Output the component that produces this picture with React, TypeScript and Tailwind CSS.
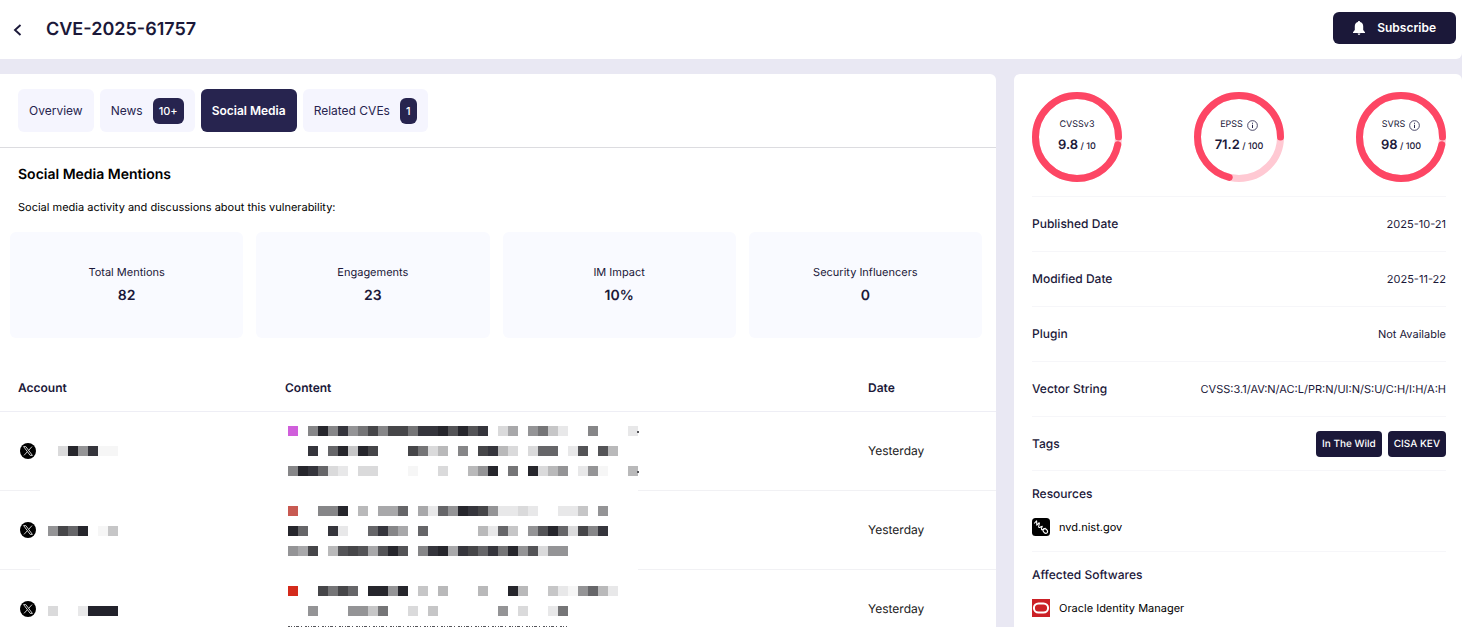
import React from "react";

const tabs = [
  { label: "Overview" },
  { label: "News", count: "10+" },
  { label: "Social Media", active: true },
  { label: "Related CVEs", count: "1" },
];

const stats = [
  { label: "Total Mentions", value: "82" },
  { label: "Engagements", value: "23" },
  { label: "IM Impact", value: "10%" },
  { label: "Security Influencers", value: "0" },
];

const scores = [
  { label: "CVSSv3", value: "9.8", max: "10", percent: 97, info: false },
  { label: "EPSS", value: "71.2", max: "100", percent: 71.2, info: true },
  { label: "SVRS", value: "98", max: "100", percent: 97, info: true },
];

const details = [
  { label: "Published Date", value: "2025-10-21" },
  { label: "Modified Date", value: "2025-11-22" },
  { label: "Plugin", value: "Not Available" },
  { label: "Vector String", value: "CVSS:3.1/AV:N/AC:L/PR:N/UI:N/S:U/C:H/I:H/A:H" },
];

const tags = ["In The Wild", "CISA KEV"];

// Redacted posts: one character per tile, "." is an empty tile.
const mentions = [
  {
    id: 1,
    date: "Yesterday",
    top: 2,
    account: ".d293ff",
    content: [
      "M.828397484473325253.da.97ce..8...e",
      "..3.62c24...47db.8.43bd.d66.e5.5b",
      "8236de.dd...f..d..b92.7.2db9.e9f..b",
    ],
    dots: [0, 2],
  },
  {
    id: 2,
    date: "Yesterday",
    top: 3,
    account: "9462.fc",
    content: [
      "R..882.b.aa6.ae692349eede..eec.9",
      "26..3e..638a.6.....be6c.9526d483",
      "9a4.b545a525.832a34637295d99",
    ],
    dots: [],
  },
  {
    id: 3,
    date: "Yesterday",
    top: 4,
    account: "d..e111",
    content: [
      "D..4746.2292.c.b...b..2b..cef96be",
      "..9...99c7..d.c......9.d..e7",
    ],
    dots: [],
    cut: true,
  },
];

const tileColors: Record<string, string> = {
  "1": "#22222b",
  "2": "#26262c",
  "3": "#35353c",
  "4": "#464649",
  "5": "#545457",
  "6": "#666669",
  "7": "#757577",
  "8": "#868688",
  "9": "#949496",
  a: "#a8a8aa",
  b: "#b9b9ba",
  c: "#c6c6c7",
  d: "#dadadb",
  e: "#e8e8e9",
  f: "#f6f6f6",
  M: "#d05fdb",
  R: "#c85a52",
  D: "#d42b1c",
};

interface TilesProps {
  lines: string[];
  top: number;
  width: number;
  dots?: number[];
  cut?: boolean;
}

const Tiles: React.FC<TilesProps> = ({ lines, top, width, dots = [], cut }) => {
  return (
    <svg width={width} height={54} className="block overflow-visible" shapeRendering="crispEdges" aria-hidden="true">
      {lines.map((line, row) =>
        line.split("").map((tile, col) =>
          tile === "." ? null : (
            <rect
              key={`${row}-${col}`}
              x={col * 10}
              y={top + row * 20}
              width={10}
              height={10}
              fill={tileColors[tile]}
            />
          )
        )
      )}
      {dots.map((row) => (
        <rect key={row} x={349} y={top + row * 20 + 5} width={2} height={2} fill="#55555a" />
      ))}
      {cut && (
        <path
          d={`M0 ${top + 40.5}H280`}
          stroke="#55555a"
          strokeDasharray="2 1 1 2 1 1 3 2 1 3"
        />
      )}
    </svg>
  );
};

const XLogo = () => (
  <svg width="16" height="16" viewBox="0 0 16 16" className="block" aria-hidden="true">
    <circle cx="8" cy="8" r="8" fill="#000" />
    <path
      d="M3.6 3.6h2.2l6.6 8.8h-2.2zM12 3.6 8.7 7.3M7.3 8.8 4 12.4"
      fill="none"
      stroke="#fff"
      strokeWidth="0.8"
    />
  </svg>
);

const InfoIcon = () => (
  <svg width="11" height="11" viewBox="0 0 12 12" fill="none" stroke="#28264d" aria-hidden="true">
    <circle cx="6" cy="6" r="5.3" strokeWidth="0.9" />
    <path d="M6 5.2v3.6M6 3v1.1" strokeWidth="1.1" />
  </svg>
);

const BellIcon = () => (
  <svg width="12" height="14" viewBox="0 0 12 14" fill="#fff" aria-hidden="true">
    <path d="M6 0C5.3 0 4.9.5 4.9 1.1 2.9 1.6 1.8 3.2 1.8 5.2V9L0 11.2V12h12v-.8L10.2 9V5.2C10.2 3.2 9.1 1.6 7.1 1.1 7.1.5 6.7 0 6 0zM4.7 12.6h2.6C7.3 13.5 6.7 14 6 14s-1.3-.5-1.3-1.4z" />
  </svg>
);

const NvdLogo = () => (
  <svg width="18" height="18" viewBox="0 0 18 18" aria-hidden="true">
    <rect width="18" height="18" rx="3.5" fill="#000" />
    <path
      d="M2.2 5.5 4.6 2.8 4.8 7.2 7.2 4.6M7.2 4.6C8 6.3 6 8 6.8 9.2S9.6 7.8 10.2 8.2 8.6 10.6 9.6 11.6 12.4 9.8 13.4 10.2"
      fill="none"
      stroke="#fff"
      strokeWidth="1.1"
      strokeLinejoin="round"
    />
    <ellipse
      cx="13.3"
      cy="13"
      rx="2.5"
      ry="1.9"
      transform="rotate(45 13.3 13)"
      fill="none"
      stroke="#fff"
      strokeWidth="1.1"
    />
  </svg>
);

const OracleLogo = () => (
  <svg width="18" height="18" viewBox="0 0 18 18" aria-hidden="true">
    <rect width="18" height="18" fill="#cb2026" />
    <rect x="1.9" y="4.4" width="14.2" height="9.2" rx="4.6" fill="none" stroke="#fff" strokeWidth="2" />
  </svg>
);

interface ScoreRingProps {
  score: {
    label: string;
    value: string;
    max: string;
    percent: number;
    info: boolean;
  };
}

const ScoreRing: React.FC<ScoreRingProps> = ({ score }) => {
  return (
    <div className="grid size-[90px] place-items-center">
      <svg viewBox="0 0 90 90" className="col-start-1 row-start-1 size-full" fill="none" aria-hidden="true">
        <circle cx="45" cy="45" r="41.5" stroke="#ffc9d3" strokeWidth="7" />
        <circle
          cx="45"
          cy="45"
          r="41.5"
          stroke="#fd4664"
          strokeWidth="7"
          strokeLinecap="round"
          pathLength="100"
          strokeDasharray={`${score.percent} 100`}
          transform="matrix(1 0 0 -1 0 90)"
        />
      </svg>
      <div className="col-start-1 row-start-1 pb-1 text-center">
        <div className="flex h-5 items-center justify-center gap-1 text-[9px]">
          {score.label}
          {score.info && <InfoIcon />}
        </div>
        <div className="h-5 text-[9px] leading-5 font-medium">
          <span className="text-[13px] font-semibold">{score.value}</span> / {score.max}
        </div>
      </div>
    </div>
  );
};

const App = () => {
  return (
    <div className="flex h-screen flex-col gap-[15px] overflow-hidden bg-[#e9e8f3] font-[Inter,sans-serif] text-[#1b1839] [text-rendering:geometricPrecision]">
      <header className="flex h-[59px] shrink-0 items-center justify-between rounded-br-md bg-white pr-1.5 pl-3">
        <div className="flex items-center gap-6">
          <button type="button" aria-label="Back" className="cursor-pointer">
            <svg width="10" height="12" viewBox="0 0 10 12" fill="none" stroke="currentColor" strokeWidth="1.9">
              <path d="M8.5 1 3 6l5.5 5" />
            </svg>
          </button>
          <h1 className="text-lg font-semibold">CVE-2025-61757</h1>
        </div>
        <button
          type="button"
          className="mb-1 flex h-8 cursor-pointer items-center gap-3 rounded-md bg-[#1b1839] px-5 text-xs font-semibold text-white"
        >
          <BellIcon />
          Subscribe
        </button>
      </header>

      <div className="flex min-h-0 flex-1 gap-[18px]">
        <main className="min-w-0 flex-1 overflow-hidden rounded-tr-md bg-white">
          <nav className="flex gap-1.5 border-b border-[#dcdce0] px-[18px] py-[15px]">
            {tabs.map((tab) => (
              <button
                key={tab.label}
                type="button"
                className={
                  tab.active
                    ? "flex h-[43px] cursor-pointer items-center rounded-md bg-[#27244f] px-[11px] text-xs font-semibold text-white"
                    : "flex h-[43px] cursor-pointer items-center gap-2.5 rounded-md bg-[#f5f5fe] px-[11px] text-xs text-[#27244f]"
                }
              >
                {tab.label}
                {tab.count && (
                  <span className="rounded-md bg-[#27244f] px-1.5 text-[11px] leading-[26px] font-medium text-white">
                    {tab.count}
                  </span>
                )}
              </button>
            ))}
          </nav>

          <div className="px-[18px] pt-[17px] text-black">
            <h2 className="text-sm leading-5 font-semibold">Social Media Mentions</h2>
            <p className="mt-3.5 text-[11px] leading-4">
              Social media activity and discussions about this vulnerability:
            </p>
          </div>

          <div className="mt-[17px] grid grid-cols-4 gap-[13px] pr-3.5 pl-2.5">
            {stats.map((stat) => (
              <div key={stat.label} className="rounded-md bg-[#f9faff] py-[30px] text-center">
                <div className="text-[11px] leading-5">{stat.label}</div>
                <div className="mt-0.5 text-sm leading-6 font-semibold">{stat.value}</div>
              </div>
            ))}
          </div>

          <table className="mt-7 w-full table-fixed text-left">
            <colgroup>
              <col className="w-10" />
              <col className="w-[245px]" />
              <col className="w-[353px]" />
              <col />
              <col className="w-32" />
            </colgroup>
            <thead>
              <tr className="h-[45px] border-b border-[#eeeef5] text-xs">
                <th colSpan={2} className="pl-[18px] font-semibold">Account</th>
                <th colSpan={2} className="font-semibold">Content</th>
                <th className="font-semibold">Date</th>
              </tr>
            </thead>
            <tbody>
              {mentions.map((mention) => (
                <tr key={mention.id} className="h-[79px]">
                  <td className="border-b border-[#f1f1f4] pl-5">
                    <XLogo />
                  </td>
                  <td className="pl-2">
                    <Tiles lines={["", mention.account]} top={mention.top} width={70} />
                  </td>
                  <td className="pl-[3px]">
                    <Tiles
                      lines={mention.content}
                      top={mention.top}
                      width={350}
                      dots={mention.dots}
                      cut={mention.cut}
                    />
                  </td>
                  <td className="border-b border-[#f1f1f4]" />
                  <td className="border-b border-[#f1f1f4] text-xs text-[#222]">{mention.date}</td>
                </tr>
              ))}
            </tbody>
          </table>
        </main>

        <aside className="w-[448px] shrink-0 overflow-hidden rounded-t-md bg-white pt-[18px] pr-4 pl-[18px]">
          <div className="flex justify-between pb-3.5">
            {scores.map((score) => (
              <ScoreRing key={score.label} score={score} />
            ))}
          </div>

          <dl>
            {details.map((item) => (
              <div key={item.label} className="flex h-[55px] items-center justify-between border-t border-[#f6f6f9]">
                <dt className="text-xs font-medium">{item.label}</dt>
                <dd className="text-[11px]">{item.value}</dd>
              </div>
            ))}
            <div className="flex h-[54px] items-center justify-between border-t border-[#f6f6f9]">
              <dt className="text-xs font-medium">Tags</dt>
              <dd className="flex gap-1.5">
                {tags.map((tag) => (
                  <span key={tag} className="rounded bg-[#1b1839] px-1.5 text-[10px] leading-[26px] font-medium text-white">
                    {tag}
                  </span>
                ))}
              </dd>
            </div>
          </dl>

          <section className="border-t border-[#f6f6f9] pt-[13px] pb-[15px]">
            <h3 className="text-xs leading-5 font-medium">Resources</h3>
            <a href="https://nvd.nist.gov" className="mt-3.5 flex items-center gap-[9px] text-[11px] leading-[18px] text-black">
              <NvdLogo />
              nvd.nist.gov
            </a>
          </section>
          <section className="border-t border-[#f6f6f9] pt-[13px]">
            <h3 className="text-xs leading-5 font-medium">Affected Softwares</h3>
            <div className="mt-3.5 flex items-center gap-[9px] text-[11px] leading-[18px] text-black">
              <OracleLogo />
              Oracle Identity Manager
            </div>
          </section>
        </aside>
      </div>
    </div>
  );
};

export default App;
